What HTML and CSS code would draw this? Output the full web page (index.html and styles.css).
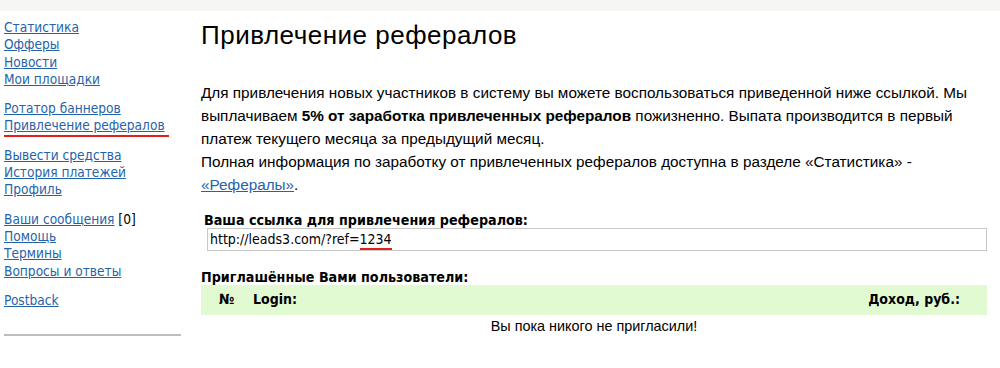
FILE: index.html
```html
<!DOCTYPE html>
<html lang="ru">
<head>
    <meta charset="UTF-8">
    <title>Привлечение рефералов</title>
    <link rel="stylesheet" href="styles.css">
</head>
<body>
    <div class="topbar"></div>
    <div class="page">
        <div class="sidebar">
            <div class="menu-group">
                <a href="#">Статистика</a>
                <a href="#">Офферы</a>
                <a href="#">Новости</a>
                <a href="#">Мои площадки</a>
            </div>
            <div class="menu-group">
                <a href="#">Ротатор баннеров</a>
                <a href="#" class="active">Привлечение рефералов</a>
            </div>
            <div class="menu-group">
                <a href="#">Вывести средства</a>
                <a href="#">История платежей</a>
                <a href="#">Профиль</a>
            </div>
            <div class="menu-group">
                <div><a href="#" class="inline">Ваши сообщения</a> [0]</div>
                <a href="#">Помощь</a>
                <a href="#">Термины</a>
                <a href="#">Вопросы и ответы</a>
            </div>
            <div class="menu-group">
                <a href="#">Postback</a>
            </div>
            <hr class="side-line">
        </div>

        <div class="content">
            <h1>Привлечение рефералов</h1>
            <p class="intro">
                Для привлечения новых участников в систему вы можете воспользоваться приведенной ниже ссылкой. Мы выплачиваем <strong>5% от заработка привлеченных рефералов</strong> пожизненно. Выпата производится в первый платеж текущего месяца за предыдущий месяц.<br>
                Полная информация по заработку от привлеченных рефералов доступна в разделе «Статистика» - <a href="#">«Рефералы»</a>.
            </p>

            <div class="ref-label">Ваша ссылка для привлечения рефералов:</div>
            <div class="ref-box">http://leads3.com/?ref=<span class="mark">1234</span></div>

            <div class="invited-label">Приглашённые Вами пользователи:</div>
            <div class="table-head">
                <span class="col-num">№</span>
                <span class="col-login">Login:</span>
                <span class="col-income">Доход, руб.:</span>
            </div>
            <div class="empty">Вы пока никого не пригласили!</div>
        </div>
    </div>
</body>
</html>
```

FILE: styles.css
```css
body {
    margin: 0;
    padding: 0;
    background: #fff;
    color: #000;
    font-family: "Liberation Sans", Arial, sans-serif;
}

.topbar {
    height: 11px;
    background-color: #f6f6f4;
}

.page {
    display: flex;
}

/* Меню слева */
.sidebar {
    width: 177px;
    padding: 8px 0 0 4px;
    font-family: "DejaVu Sans Condensed", "DejaVu Sans", sans-serif;
    font-size: 13.6px;
    line-height: 17.3px;
}
.menu-group {
    margin-bottom: 12px;
}
.menu-group a {
    display: block;
    color: #2563a8;
    text-decoration: underline;
    width: max-content;
}
.menu-group a.inline {
    display: inline;
}
.menu-group a.active {
    border-bottom: 2px solid #e0201a;
    margin-bottom: -2px;
    width: 165px;
}
.side-line {
    border: none;
    border-top: 2px solid #bdbdbd;
    margin: 25px 0 0 0;
    width: 177px;
}

/* Основная часть */
.content {
    width: 786px;
    margin-left: 20px;
}
.content h1 {
    font-weight: normal;
    font-size: 26px;
    letter-spacing: 0.5px;
    line-height: 30px;
    margin: 9px 0 0 0;
}
.intro {
    font-size: 15.3px;
    line-height: 23px;
    margin: 31px 0 0 0;
}
.intro a {
    color: #2563a8;
}
.ref-label {
    font-family: "DejaVu Sans Condensed", "DejaVu Sans", sans-serif;
    font-weight: bold;
    font-size: 14.2px;
    margin: 16px 0 0 3px;
}
.ref-box {
    margin: 0 0 0 6px;
    border: 1px solid #c8c8c8;
    height: 21px;
    line-height: 21px;
    padding-left: 2px;
    font-family: "DejaVu Sans Condensed", "DejaVu Sans", sans-serif;
    font-size: 14px;
}
.mark {
    border-bottom: 2px solid #e0201a;
    padding-bottom: 1px;
}
.invited-label {
    font-family: "DejaVu Sans Condensed", "DejaVu Sans", sans-serif;
    font-weight: bold;
    font-size: 14.2px;
    margin-top: 18px;
}
.table-head {
    display: flex;
    align-items: center;
    background-color: #e1fad2;
    height: 28px;
    padding-bottom: 2px;
    font-family: "DejaVu Sans Condensed", "DejaVu Sans", sans-serif;
    font-weight: bold;
    font-size: 14px;
}
.col-num {
    margin-left: 18px;
    width: 34px;
}
.col-login {
    flex: 1;
}
.col-income {
    margin-right: 27px;
}
.empty {
    text-align: center;
    font-size: 14.4px;
    margin-top: 3px;
}
```
